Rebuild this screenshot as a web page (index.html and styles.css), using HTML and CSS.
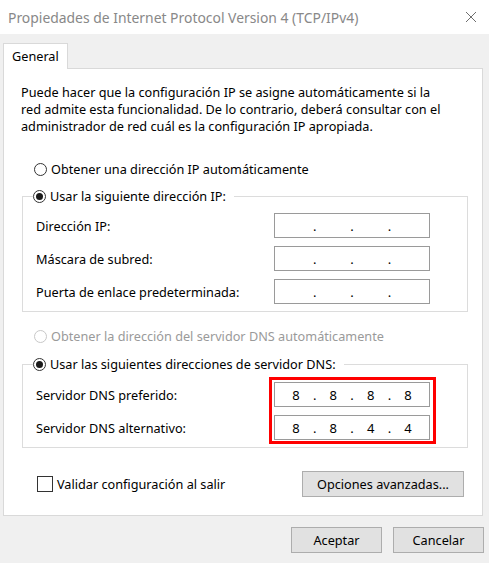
FILE: index.html
```html
<!DOCTYPE html>
<html lang="es">
<head>
<meta charset="utf-8">
<title>Propiedades de Internet Protocol Version 4 (TCP/IPv4)</title>
<link rel="stylesheet" href="styles.css">
</head>
<body>
<div class="window">
  <div class="titlebar">
    <span class="title">Propiedades de Internet Protocol Version 4 (TCP/IPv4)</span>
    <svg class="close" width="12" height="12" viewBox="0 0 12 12"><path d="M1 1 L11 11 M11 1 L1 11" stroke="#6e6e6e" stroke-width="1" fill="none"/></svg>
  </div>
  <div class="main">
    <div class="tabs"><div class="tab">General</div></div>
    <div class="panel">
      <p class="intro">Puede hacer que la configuración IP se asigne automáticamente si la<br>red admite esta funcionalidad. De lo contrario, deberá consultar con el<br>administrador de red cuál es la configuración IP apropiada.</p>

      <div class="radio-row first"><span class="radio"></span><span>Obtener una dirección IP automáticamente</span></div>

      <fieldset class="group g1">
        <legend class="radio-row legend"><span class="radio checked"></span><span>Usar la siguiente dirección IP:</span></legend>
        <div class="rows">
          <div class="row"><span>Dirección IP:</span><div class="ip"><span></span><span>.</span><span></span><span>.</span><span></span><span>.</span><span></span></div></div>
          <div class="row"><span>Máscara de subred:</span><div class="ip"><span></span><span>.</span><span></span><span>.</span><span></span><span>.</span><span></span></div></div>
          <div class="row"><span>Puerta de enlace predeterminada:</span><div class="ip"><span></span><span>.</span><span></span><span>.</span><span></span><span>.</span><span></span></div></div>
        </div>
      </fieldset>

      <div class="radio-row dns-auto disabled"><span class="radio"></span><span>Obtener la dirección del servidor DNS automáticamente</span></div>

      <fieldset class="group g2">
        <legend class="radio-row legend"><span class="radio checked"></span><span>Usar las siguientes direcciones de servidor DNS:</span></legend>
        <div class="rows dns-rows">
          <div class="row"><span>Servidor DNS preferido:</span><div class="ip"><span>8</span><span>.</span><span>8</span><span>.</span><span>8</span><span>.</span><span>8</span></div></div>
          <div class="row"><span>Servidor DNS alternativo:</span><div class="ip"><span>8</span><span>.</span><span>8</span><span>.</span><span>4</span><span>.</span><span>4</span></div></div>
          <div class="highlight"></div>
        </div>
      </fieldset>

      <div class="options">
        <label class="check-row"><span class="checkbox"></span><span>Validar configuración al salir</span></label>
        <button class="btn adv">Opciones avanzadas...</button>
      </div>
    </div>
    <div class="footer">
      <button class="btn dlg">Aceptar</button>
      <button class="btn dlg">Cancelar</button>
    </div>
  </div>
</div>
</body>
</html>
```

FILE: styles.css
```css
html, body {
  margin: 0;
  padding: 0;
  width: 489px;
  height: 563px;
  overflow: hidden;
  background: #f0f0f0;
}

body {
  font-family: "Noto Sans", "Liberation Sans", sans-serif;
  font-size: 12.7px;
  color: #000;
}

.window {
  width: 489px;
  height: 563px;
}

.titlebar {
  height: 34px;
  background: #fff;
  display: flex;
  align-items: center;
  justify-content: space-between;
  padding: 0 12px 0 8px;
  box-sizing: border-box;
}

.title {
  font-size: 13.9px;
  color: #888;
}

.close {
  display: block;
}

.main {
  padding: 9px 6px 0 3px;
}

.tabs {
  display: flex;
}

.tab {
  width: 65px;
  height: 26px;
  box-sizing: border-box;
  border: 1px solid #d9d9d9;
  border-bottom: 0;
  background: #fff;
  margin-bottom: -1px;
  position: relative;
  z-index: 1;
  padding-left: 8px;
  line-height: 24px;
}

.panel {
  height: 448px;
  box-sizing: border-box;
  border: 1px solid #d9d9d9;
  background: #fff;
  padding: 15px 14px 0 18px;
}

.intro {
  margin: 0 0 0 -1px;
  line-height: 17px;
  white-space: nowrap;
}

.radio-row {
  display: flex;
  align-items: center;
  gap: 4px;
  height: 18px;
}

.radio-row.first {
  margin-top: 25px;
  padding-left: 12px;
}

.radio {
  width: 13px;
  height: 13px;
  box-sizing: border-box;
  border: 1px solid #333;
  border-radius: 50%;
  background: #fff;
  position: relative;
  flex: none;
}

.radio.checked::after {
  content: "";
  position: absolute;
  left: 2px;
  top: 2px;
  width: 7px;
  height: 7px;
  border-radius: 50%;
  background: #1a1a1a;
}

.disabled {
  color: #9a9a9a;
}

.disabled .radio {
  border-color: #c8c8c8;
}

.group {
  margin: 9px 0 0 0;
  padding: 0;
  border: 1px solid #dcdcdc;
  min-width: 0;
}

.group.g2 {
  margin-top: 10px;
}

.legend {
  padding: 0 8px 0 0;
  margin-left: 10px;
}

.rows {
  padding: 4px 37px 3px 13px;
  position: relative;
}

.dns-rows {
  padding-top: 5px;
}

.row {
  height: 33px;
  display: flex;
  align-items: center;
  justify-content: space-between;
}

.ip {
  width: 156px;
  height: 25px;
  box-sizing: border-box;
  border: 1px solid #9a9a9a;
  background: #fff;
  display: grid;
  grid-template-columns: repeat(7, 18.7px);
  justify-content: center;
  align-items: center;
  text-align: center;
  font-size: 13px;
}

.dns-auto {
  margin-top: 15px;
  padding-left: 12px;
}

.highlight {
  position: absolute;
  left: 246px;
  top: 4px;
  width: 167px;
  height: 67px;
  box-sizing: border-box;
  border: 3px solid #f00;
  pointer-events: none;
}

.options {
  margin-top: 23px;
  display: flex;
  justify-content: space-between;
  align-items: center;
  padding: 0 4px 0 15px;
}

.check-row {
  display: flex;
  align-items: center;
  gap: 4px;
}

.checkbox {
  width: 16px;
  height: 16px;
  box-sizing: border-box;
  border: 1px solid #333;
  background: #fff;
}

.btn {
  font-family: inherit;
  font-size: 12.7px;
  color: #000;
  background: #e1e1e1;
  border: 1px solid #adadad;
  border-radius: 0;
  height: 26px;
  padding: 0;
  margin: 0;
}

.btn.adv {
  width: 162px;
}

.footer {
  margin-top: 11px;
  margin-right: -1px;
  display: flex;
  justify-content: flex-end;
  gap: 11px;
}

.btn.dlg {
  width: 91px;
}
```
